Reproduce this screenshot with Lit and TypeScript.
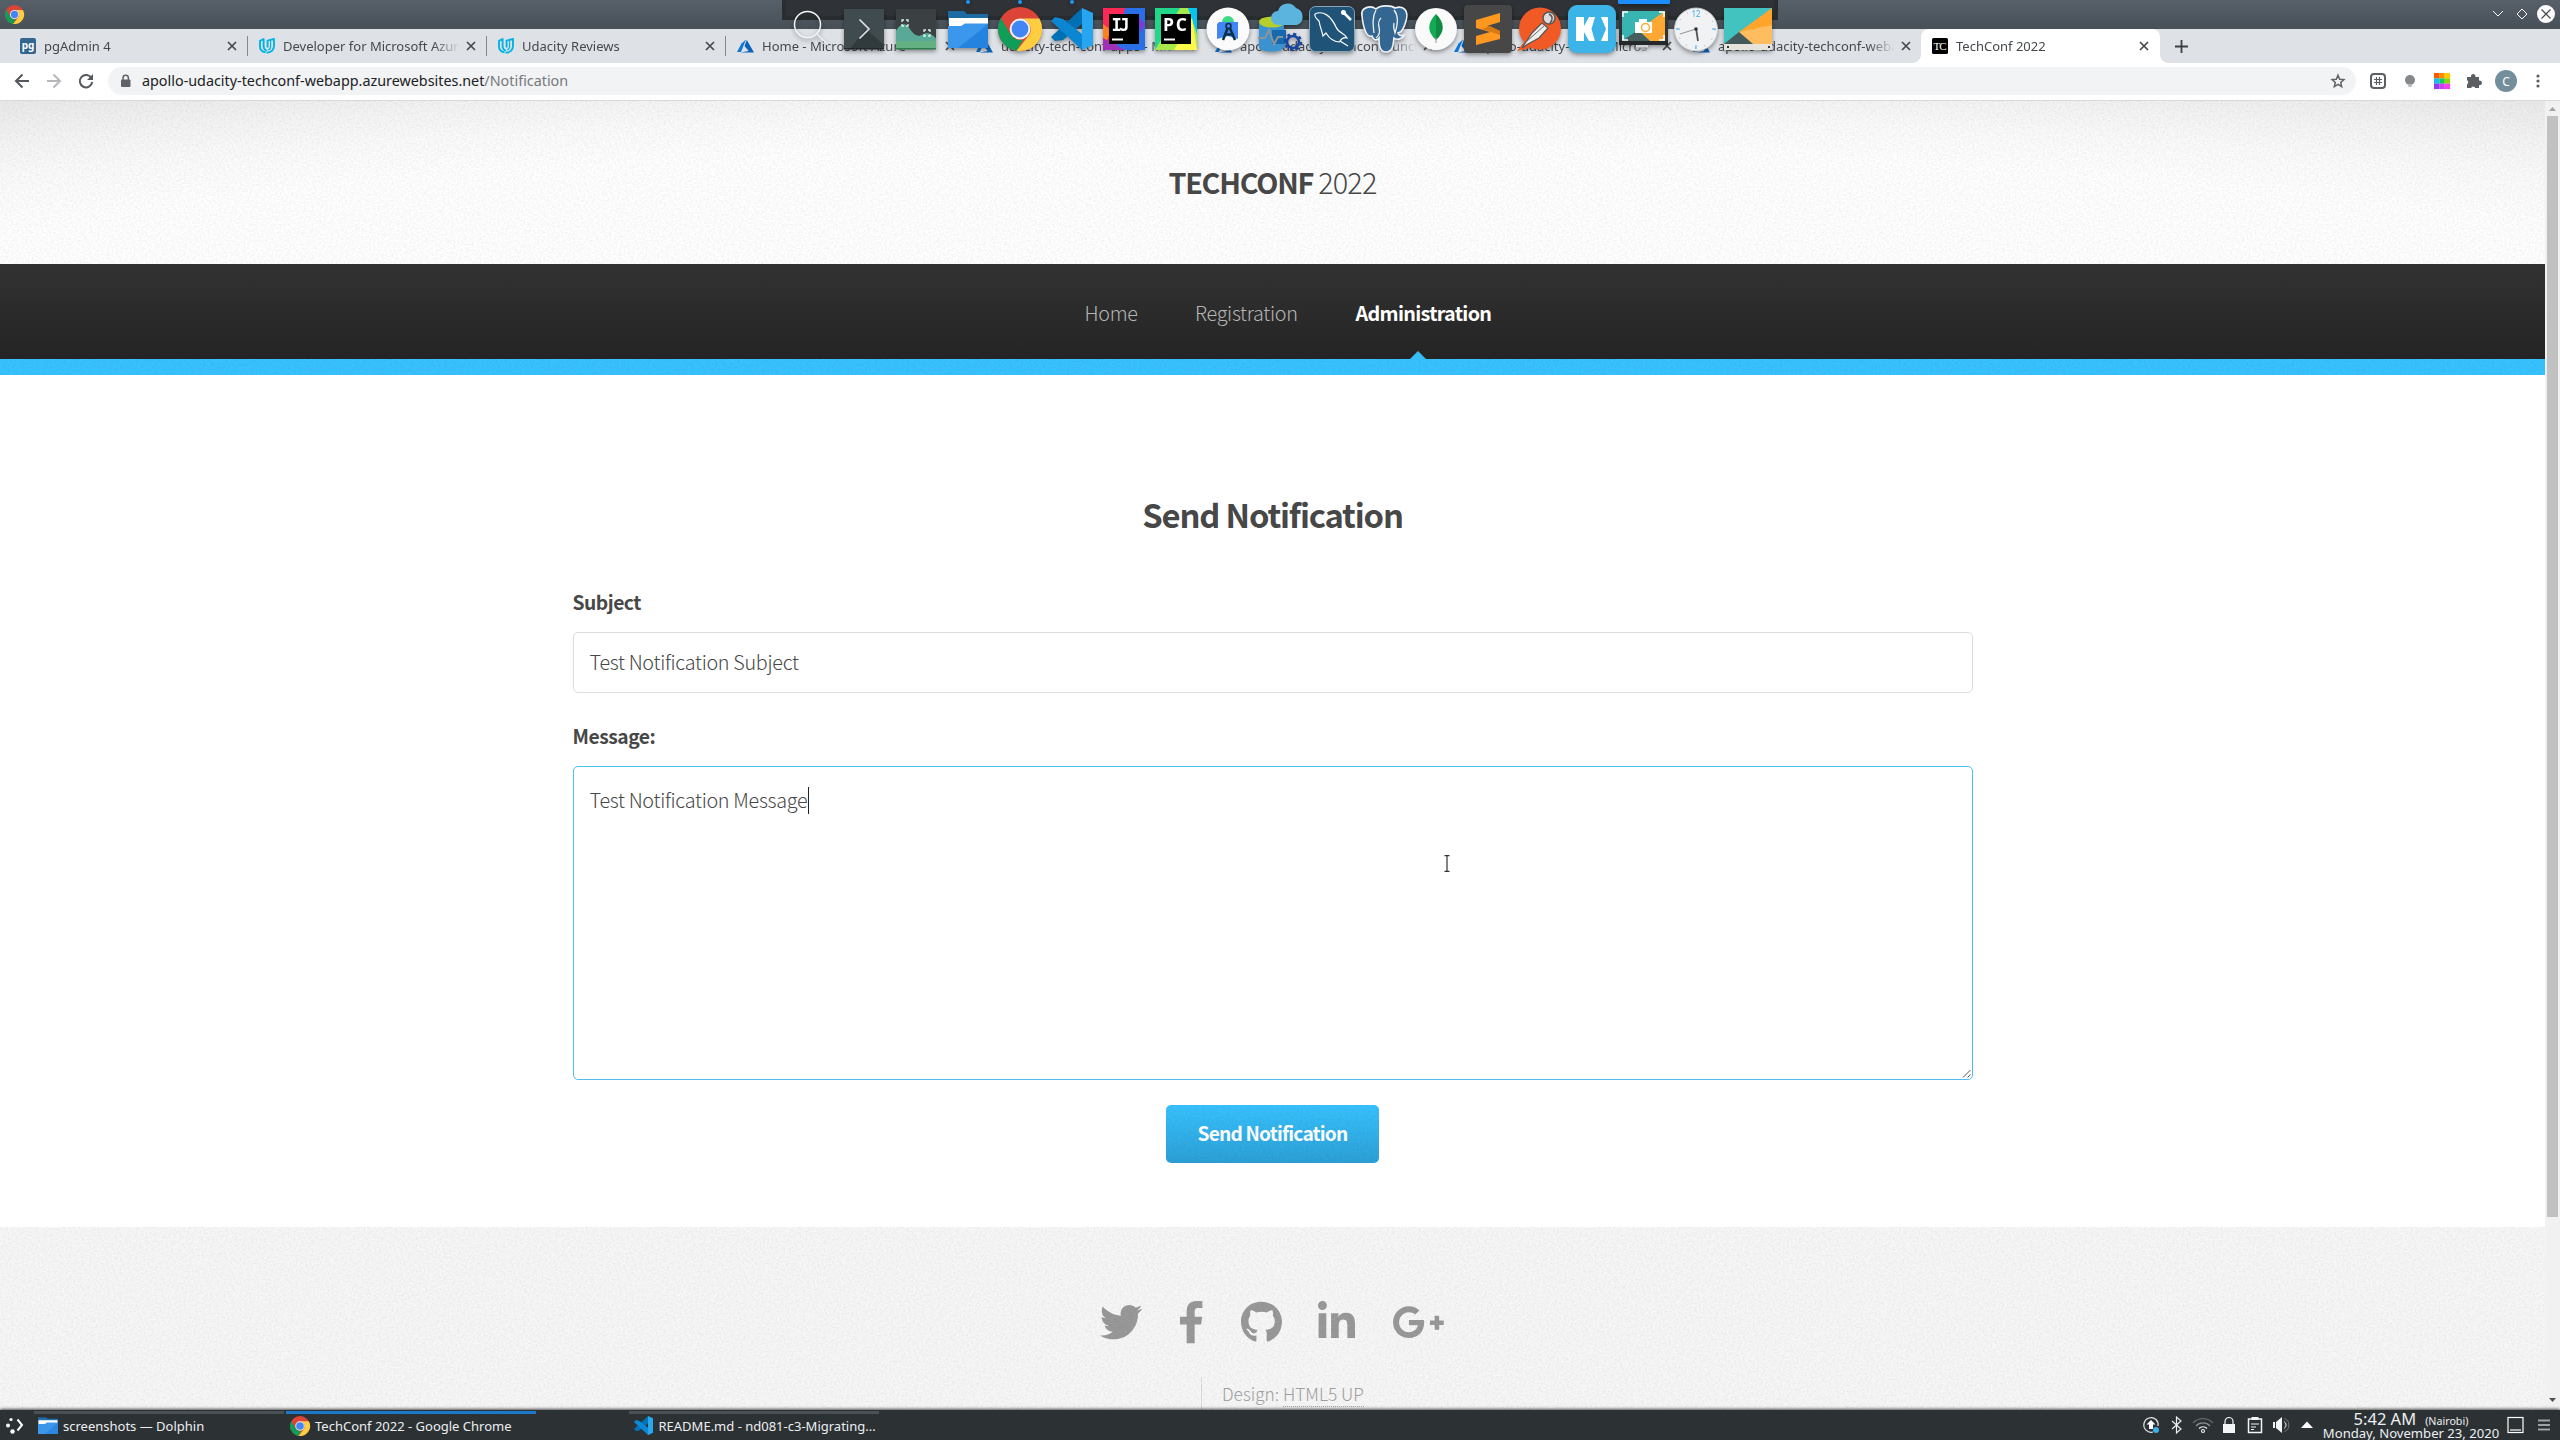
import { LitElement, html, svg, css } from "lit";
import { customElement } from "lit/decorators.js";

const chromeLogo = (size: number) => html`<svg width=${size} height=${size} viewBox="2 2 44 44">
  <circle cx="24" cy="24" r="22" fill="#db4437" />
  <path d="M4.9 13 14.6 29.6A11 11 0 0 0 27 34.6L20.6 45.8A22 22 0 0 1 4.9 13z" fill="#0f9d58" />
  <path d="M24 13.5H43.4A22 22 0 0 1 20.6 45.8L33.5 29.5A11 11 0 0 0 24 13.5z" fill="#ffcd40" />
  <circle cx="24" cy="24" r="10.4" fill="#f1f1f1" />
  <circle cx="24" cy="24" r="8.4" fill="#4285f4" />
</svg>`;

const folderLogo = (w: number, h: number) => html`<svg width=${w} height=${h} viewBox="0 0 40 37" preserveAspectRatio="none">
  <path d="M0 1h16l3 3h21v16H0z" fill="#1f6fae" />
  <path d="M1 7h38v12H1z" fill="#fff" />
  <path d="M0 15h14l4-3h22v25H0z" fill="#3b97ea" />
  <path d="M40 12v25H14z" fill="#1f7fdc" opacity=".6" />
</svg>`;

const codeLogo = (w: number, h: number) => html`<svg width=${w} height=${h} viewBox="0 0 42 42">
  <path d="M31 0 0 29l4 4 8-1 19-16z" fill="#0073b7" />
  <path d="M0 13l4-4 8 2 19 15v16z" fill="#0a8ad6" />
  <path d="M31 0l11 5v32l-11 5z" fill="#28a8f0" />
</svg>`;

const udacityMark = html`<svg width="16" height="16" viewBox="0 0 16 16" fill="none" stroke="#02b3e4" stroke-width="1.900" stroke-linejoin="round">
  <path d="M6.500 14.300C3.200 13.800 1 12 1 8.500V2.800L4.600 1V8c0 2.600 1 4 3.400 4.600" />
  <path d="M8.600 9.500V2.600L15 1v7c0 4-3 6.800-7.500 6.600" />
  <path d="M11.600 3v5.600c0 1.800-.8 3-2.400 3.400" stroke-width="1.200" />
</svg>`;

const azureMark = html`<svg width="17" height="16" viewBox="0 0 17 16">
  <path d="M9 1.500 4.500 5.500 0 14h4z" fill="#0f78d4" />
  <path d="M9.800 2 7.500 8l4.200 5L3.500 14.500H17z" fill="#0a63b8" />
</svg>`;

const pgMark = html`<svg width="16" height="16" viewBox="0 0 16 16">
  <rect width="16" height="16" rx="2" fill="#326690" />
  <text x="8" y="11" text-anchor="middle" font-family="Noto Sans, sans-serif" font-weight="700" font-size="10" fill="#fff">pg</text>
</svg>`;

const tcMark = html`<svg width="16" height="16" viewBox="0 0 16 16">
  <rect width="16" height="16" rx="1.500" fill="#000" />
  <text x="8" y="12" text-anchor="middle" font-family="Liberation Serif, serif" font-size="11" textLength="13" fill="#fff">TC</text>
</svg>`;

const crossMark = html`<svg class="cross" width="10" height="10" viewBox="0 0 10 10" stroke="#45494d" stroke-width="1.700">
  <path d="M1 1l8 8M9 1l-8 8" />
</svg>`;

const tabs = [
  { icon: pgMark, label: "pgAdmin 4" },
  { icon: udacityMark, label: "Developer for Microsoft Azure" },
  { icon: udacityMark, label: "Udacity Reviews" },
  { icon: azureMark, label: "Home - Microsoft Azure" },
  { icon: azureMark, label: "udacity-tech-conf-apps - Micr" },
  { icon: azureMark, label: "apollo-udacity-techconf-funct" },
  { icon: azureMark, label: "apollo-udacity-conf - Micros" },
  { icon: azureMark, label: "apollo-udacity-techconf-weba" },
];

/* Each drawing sits in a 52 x 60 slot, centred on x = 26. */
const dockIcons = [
  svg`<g fill="none" stroke="#f4f6f7" stroke-width="1.500"><circle cx="21.500" cy="24.500" r="13"/><path d="M31 34l11 11" stroke-opacity=".8"/></g>`,
  svg`<rect x="6" y="9" width="40" height="40" fill="#3f4b4e"/><path d="M28 29l18 16v4H12z" fill="#232a2c" opacity=".5"/><path d="M6 48h40v1.500H6z" fill="#22282a"/><path d="M21.500 19.500 31 29l-9.500 9.500" fill="none" stroke="#e3e6e8" stroke-width="1.600"/>`,
  svg`<rect x="6" y="9" width="40" height="40" fill="#3b4043"/><path d="M6 31c5-8 9-9 13-3 5 8 10 10 15 6 4-2 9 1 12 5v10H6z" fill="#63b183"/><path d="M6 31c5-8 9-9 13-3 5 8 10 10 15 6 4-2 9 1 12 5v2H6z" fill="#5aa898"/><path d="M6 48h40v1.500H6z" fill="#2f7d4e"/><path d="M12 22v-2h2m2 0h2v2m0 2v2h-2m-2 0h-2v-2M34 32v-2h2m2 0h2v2m0 2v2h-2m-2 0h-2v-2" fill="none" stroke="#d9f2ec" stroke-width="1.300"/>`,
  svg`<path d="M6 11h16l3 3h21v10H6z" fill="#1d6ba3"/><path d="M7 18h39v10H7z" fill="#fff"/><path d="M6 26h13l4-2.500h23V48H6z" fill="#3b97ec"/><path d="M46 24v24H16z" fill="#1c7adb" opacity=".7"/>`,
  svg`<g transform="translate(2 5)"><circle cx="24" cy="24" r="22" fill="#db4437"/><path d="M4.900 13 14.600 29.600A11 11 0 0 0 27 34.600L20.600 45.800A22 22 0 0 1 4.900 13z" fill="#0f9d58"/><path d="M24 13.500H43.400A22 22 0 0 1 20.600 45.800L33.500 29.500A11 11 0 0 0 24 13.500z" fill="#ffcd40"/><circle cx="24" cy="24" r="10.400" fill="#f1f1f1"/><circle cx="24" cy="24" r="8.400" fill="#4285f4"/></g>`,
  svg`<g transform="translate(5 8)"><path d="M31 0 0 29l4 4 8-1 19-16z" fill="#0070b4"/><path d="M0 13l4-4 8 2 19 15v16z" fill="#0a86d2"/><path d="M31 0l11 5v32l-11 5z" fill="#27a5f0"/></g>`,
  svg`<path d="M5 8h42v42H5z" fill="#2b6fe8"/><path d="M5 8h22L17 50H5z" fill="#fe2857"/><path d="M5 24l8 6-8 20z" fill="#fc801d"/><path d="M5 38l22 12H5z" fill="#a12fb8"/><path d="M38 14l9 10-4 8z" fill="#7a3bd8"/><rect x="11" y="14" width="30" height="30" fill="#000"/><text x="13.500" y="31" font-family="DejaVu Sans Mono, monospace" font-weight="700" font-size="17" textLength="18" fill="#fff">IJ</text><path d="M14 38.500h11v2H14z" fill="#fff"/>`,
  svg`<path d="M5 8h42v42H5z" fill="#21d789"/><path d="M5 50 30 8h17v42z" fill="#a7e84a"/><path d="M38 8h9v26z" fill="#07c3f2"/><path d="M42 18l5 32H24z" fill="#fcf84a"/><rect x="11" y="14" width="30" height="30" fill="#000"/><text x="13" y="31" font-family="Open Sans, sans-serif" font-weight="700" font-size="17.500" textLength="24" fill="#fff">PC</text><path d="M14 38.500h11v2H14z" fill="#fff"/>`,
  svg`<circle cx="26" cy="29" r="21.500" fill="#fbfbfb"/><path d="M20 22a6 6 0 0 1 12 0z" fill="#3ddc84"/><path d="M17 22h19v17l-10-3-11 3V24z" fill="#4285f4"/><path d="M26.500 26 21 40M27 26 33 40M22 34.500h10" fill="none" stroke="#073042" stroke-width="2.500"/><circle cx="26.500" cy="26" r="2.500" fill="#4285f4" stroke="#073042" stroke-width="1.500"/>`,
  svg`<path d="M5 23v24c0 6 25 6 25 0V23z" fill="#3a93cf"/><ellipse cx="18" cy="22" rx="13" ry="5.500" fill="#b6cf2b"/><path d="M18 30h14v14H18z" fill="#1769ae"/><path d="M24 25a7 7 0 0 1 0-14 10 10 0 0 1 18-3 9 9 0 0 1 1 17z" fill="#5ab4dd"/><path d="M4 38h7l4-8 5 14 4-7h5" fill="none" stroke="#8d9499" stroke-width="2"/><circle cx="39" cy="42" r="6" fill="none" stroke="#1646a0" stroke-width="2.500"/><circle cx="39" cy="42" r="8" fill="none" stroke="#1646a0" stroke-width="2.500" stroke-dasharray="3 3.280"/>`,
  svg`<rect x="3.500" y="6.500" width="45" height="45" rx="6" fill="#1f5377" stroke="#8aa3b5"/><path d="M9 14c8-4 16 2 21 13 3 7 9 6 11 11-3-1-5 0-7 3l8 5M9 14c-1 3 2 5 4 7 1 6 3 10 4 15l3-3c3 5 8 9 14 9" fill="none" stroke="#fff" stroke-width="1.200"/><path d="M36 11l4 4 5 5" stroke="#fff" stroke-width="2.500"/><circle cx="37.500" cy="12.500" r="2.500" fill="#fff"/>`,
  svg`<path d="M4 16c-2-9 9-11 14-7 4-4 15-4 19-1 9-3 14 3 11 13-2 7-5 12-8 12 1 3 3 3 6 2-2 5-8 5-10 3-1 5 0 14-8 14-7 0-7-8-7-14-3 4-6 1-7-2-6 2-9-10-10-20z" fill="#336791" stroke="#eef2f5" stroke-width="1.600"/><path d="M18 10c-4 7-3 15-2 23M18 38c4-3 4-7 3-11-1-3 0-7 2-9M36 10c5 6 4 14 1 23-1-4-2-6-1-10" fill="none" stroke="#eef2f5" stroke-width="1.300"/>`,
  svg`<circle cx="26" cy="29" r="21" fill="#fafafa"/><path d="M26 14c-9 9-9 18 0 26z" fill="#13aa52"/><path d="M26 14c9 9 9 18 0 26z" fill="#0f8a43"/><path d="M26 38v5" stroke="#999"/>`,
  svg`<rect x="2" y="5" width="48" height="48" rx="4" fill="#474747"/><path d="M14 20l24-7v9l-13 4 13 5v8l-24 6v-9l14-4-14-4z" fill="#ff9820"/><path d="M28 26l10 5v4l-18-6z" fill="#d87a10"/>`,
  svg`<path d="M3 51l8-10 6 7z" fill="#f15a24"/><circle cx="26" cy="28.500" r="21" fill="#f15a24"/><path d="M8 48l10-15 10-10 6 5-9 10-11 6z" fill="#eee" stroke="#555" stroke-width="1.200"/><path d="M12 42l19-17" stroke="#666"/><circle cx="35" cy="18" r="6" fill="#ddd" stroke="#555" stroke-width="1.500"/><path d="M35 14c4 2 4 6 1 9" fill="none" stroke="#555" stroke-width="1.500"/>`,
  svg`<rect x="2" y="5" width="48" height="48" rx="9" fill="#3cb4e7"/><path d="M10 17h8v9l5-9h8l-6 12 6 12h-8l-5-9v9h-8z" fill="#fff"/><path d="M28 17h14v24H28l-3-4v-16z" fill="#fff"/><path d="M29 17h6l5 12-5 12h-6l-3.500-12z" fill="#3cb4e7"/>`,
  svg`<rect x="1" y="9" width="49" height="36" fill="#2f3437"/><path d="M4 11h43v30H4z" fill="#38b5b0"/><path d="M47 11v30H32L20 30z" fill="#ffa733"/><path d="M20 30l12 11H4z" fill="#45605f"/><path d="M1 41h49v4H1z" fill="#24282a"/><path d="M18 45h12v2.500H18z" fill="#cfd3d5"/><path d="M5 17v-5h5M41 12h5v5M46 35v5h-5M10 40H5v-5" fill="none" stroke="#fff" stroke-width="1.600"/><path d="M17 22h17v11H17zM21 19h8v3h-8z" fill="#fff"/><circle cx="27.500" cy="27.500" r="4" fill="#fff" stroke="#ffa733" stroke-width="1.500"/>`,
  svg`<circle cx="26" cy="29.500" r="21.500" fill="#f0f2f4" stroke="#c9ccce"/><circle cx="26" cy="29.500" r="18.500" fill="none" stroke="#8a8f93" stroke-dasharray=".8 8.880"/><text x="26" y="17" text-anchor="middle" font-family="Noto Sans, sans-serif" font-size="8" fill="#3daee9">12</text><path d="M26 29l-16 5" stroke="#999" stroke-width="1.300"/><path d="M26 28l2 13" stroke="#555" stroke-width="1.800"/><path d="M6 29h4M42 29h4M26 45v4" stroke="#3daee9"/><circle cx="26" cy="29" r="1.800" fill="#333"/>`,
  svg`<path d="M2 8h48v42H2z" fill="#40b4c0"/><path d="M2 8h48L17 32 2 45z" fill="#42c3c0"/><path d="M50 8v42H34L17 32z" fill="#ffa52c"/><path d="M50 25v25H34L17 32z" fill="#ffbd60"/><path d="M17 32l14 12H2z" fill="#44595a"/><path d="M2 44h48v6H2z" fill="#e6e3dd"/><path d="M5 46h2v2H5zM46 46h2v2h-2z" fill="#333"/>`,
];

const socialIcons = [
  { cls: "tw", w: 512, d: "M459.37 151.716c.325 4.548.325 9.097.325 13.645 0 138.72-105.583 298.558-298.558 298.558-59.452 0-114.68-17.219-161.137-47.106 8.447.974 16.568 1.299 25.34 1.299 49.055 0 94.213-16.568 130.274-44.832-46.132-.975-84.792-31.188-98.112-72.772 6.498.974 12.995 1.624 19.818 1.624 9.421 0 18.843-1.3 27.614-3.573-48.081-9.747-84.143-51.98-84.143-102.985v-1.299c13.969 7.797 30.214 12.67 47.431 13.319-28.264-18.843-46.781-51.005-46.781-87.391 0-19.492 5.197-37.36 14.294-52.954 51.655 63.675 129.3 105.258 216.365 109.807-1.624-7.797-2.599-15.918-2.599-24.04 0-57.828 46.782-104.934 104.934-104.934 30.213 0 57.502 12.67 76.67 33.137 23.715-4.548 46.456-13.32 66.599-25.34-7.798 24.366-24.366 44.833-46.132 57.827 21.117-2.273 41.584-8.122 60.426-16.243-14.292 20.791-32.161 39.308-52.628 54.253z" },
  { cls: "fb", w: 270, d: "M80.700 512V283H0v-91h80.700v-71.700C80.700 42.400 128.300 0 197.800 0c33.300 0 64.900 2.500 73.200 3.600V85h-48.200c-37.800 0-45.100 18-45.100 44.300V192H268l-11.700 91h-78.600v229" },
  { cls: "gh", w: 496, d: "M244.800 8C106.100 8 0 113.300 0 252c0 110.900 69.800 205.800 169.500 239.200 12.800 2.300 17.300-5.600 17.300-12.100 0-6.200-.3-40.400-.3-61.400 0 0-70 15-84.700-29.800 0 0-11.400-29.100-27.800-36.600 0 0-22.900-15.700 1.600-15.400 0 0 24.900 2 38.600 25.800 21.900 38.600 58.600 27.500 72.900 20.900 2.300-16 8.800-27.100 16-33.700-55.900-6.200-112.300-14.300-112.300-110.500 0-27.500 7.600-41.300 23.600-58.900-2.600-6.500-11.100-33.300 2.600-67.900 20.900-6.500 69 27 69 27 20-5.600 41.500-8.500 62.800-8.500s42.800 2.900 62.800 8.500c0 0 48.100-33.600 69-27 13.700 34.700 5.200 61.400 2.600 67.900 16 17.700 25.800 31.500 25.800 58.900 0 96.500-58.900 104.200-114.800 110.500 9.200 7.900 17 22.900 17 46.400 0 33.700-.3 75.400-.3 83.600 0 6.500 4.600 14.400 17.300 12.100C428.200 457.800 496 362.900 496 252 496 113.300 383.500 8 244.800 8z" },
  { cls: "li", w: 448, d: "M100.300 448H7.400V148.900h92.900zM53.800 108.100C24.100 108.100 0 83.500 0 53.800a53.800 53.800 0 0 1 107.600 0c0 29.700-24.100 54.300-53.800 54.300zM447.900 448h-92.700V302.400c0-34.700-.7-79.200-48.300-79.200-48.300 0-55.700 37.700-55.700 76.700V448h-92.800V148.900h89.100v40.800h1.300c12.400-23.500 42.700-48.300 87.900-48.300 94 0 111.300 61.900 111.300 142.300V448z" },
  { cls: "gp", w: 640, d: "M386.061 228.496c1.834 9.692 3.143 19.384 3.143 31.956C389.204 370.205 315.599 448 204.800 448c-106.084 0-192-85.915-192-192s85.916-192 192-192c51.864 0 95.083 18.859 128.611 50.292l-52.126 50.030c-14.145-13.621-39.028-29.599-76.485-29.599-65.484 0-118.920 54.221-118.920 121.277 0 67.056 53.436 121.277 118.920 121.277 75.961 0 104.513-54.745 108.965-82.773H204.800v-66.009h181.261zm185.406 6.437V179.200h-56.001v55.733h-55.733v56.001h55.733v55.733h56.001v-55.733H627.200v-56.001h-55.733z" },
];

/* Paper-like speckle laid over a panel. */
const grain = html`<svg class="grain" width="100%" height="100%">
  <filter id="speckle" x="0" y="0" width="100%" height="100%">
    <feTurbulence type="fractalNoise" baseFrequency="0.5" numOctaves="2" seed="4" stitchTiles="stitch" />
    <feColorMatrix values="0 0 0 0 0  0 0 0 0 0  0 0 0 0 0  0.11 0 0 0 -0.038" />
  </filter>
  <rect width="100%" height="100%" filter="url(#speckle)" />
</svg>`;

@customElement("app-root")
export class AppRoot extends LitElement {
  static styles = css`
    :host { display: block; width: 2560px; height: 1440px; overflow: hidden; --ui: "Noto Sans", "Open Sans", sans-serif; --page: "Noto Sans CJK SC", "Noto Sans", sans-serif; font-family: var(--ui); }
    * { box-sizing: border-box; }
    svg { display: block; flex: none; overflow: visible; }
    .screen { position: relative; display: flex; flex-direction: column; width: 2560px; height: 1440px; background: #fff; }
    .titlebar { flex: none; display: flex; align-items: center; justify-content: space-between; height: 29px; padding: 0 5px 1px 4.500px; background: linear-gradient(#576069, #475057); }
    .winbtns { display: flex; align-items: center; gap: 9px; }
    .winbtns .min { margin-right: 3px; }

    .tabstrip { flex: none; display: flex; height: 34px; padding-left: 9px; background: #dee1e6; }
    .tab { flex: none; display: flex; align-items: center; width: 239px; padding-left: 11px; }
    .tab .label { flex: none; width: 177px; margin-left: 8px; margin-right: 6px; overflow: hidden; white-space: nowrap; font-size: 13px; line-height: 20px; color: #45494d; -webkit-mask-image: linear-gradient(90deg, #000 150px, transparent 177px); mask-image: linear-gradient(90deg, #000 150px, transparent 177px); }
    .tab .cross { margin-left: auto; margin-right: 10px; }
    .tab .end { width: 1px; height: 20px; background: #85898e; }
    .tab.active { position: relative; background: #fff; border-radius: 8px 8px 0 0; }
    .tab.active .cross { margin-right: 11px; }
    .tab.active::before, .tab.active::after { content: ""; position: absolute; bottom: 0; width: 8px; height: 8px; }
    .tab.active::before { left: -8px; background: radial-gradient(circle at 0 0, transparent 7.500px, #fff 8px); }
    .tab.active::after { right: -8px; background: radial-gradient(circle at 100% 0, transparent 7.500px, #fff 8px); }
    .newtab { align-self: center; margin-left: 15px; }

    .toolbar { flex: none; display: flex; align-items: center; height: 38px; padding: 0 14px 1px; background: #fff; border-bottom: 1px solid #d6d8dc; }
    .navicons { display: flex; gap: 16px; width: 94px; }
    .pill { display: flex; align-items: center; width: 2248px; height: 28px; padding: 0 11px 0 13px; border-radius: 14px; background: #f1f3f4; }
    .url { flex: 1; margin-left: 11px; font-size: 14.350px; line-height: 20px; color: #202124; white-space: nowrap; }
    .url span { color: #76797d; }
    .exts { display: flex; align-items: center; gap: 16px; margin-left: 14px; }
    .avatar { display: flex; align-items: center; justify-content: center; width: 22px; height: 22px; margin: 0 -3px; border-radius: 50%; background: #748f9c; color: #fff; font-size: 12px; }

    .view { flex: 1; min-height: 0; display: flex; }
    .page { width: 2545px; overflow: hidden; font-family: var(--page); color: #474747; }
    .grain { position: absolute; left: 0; top: 0; pointer-events: none; }
    .head { position: relative; display: flex; align-items: center; justify-content: center; height: 163px; padding-bottom: 2px; background: radial-gradient(ellipse 2000px 230px at 50% 130%, #fff 72%, #fbfbfb 86%, #f4f4f4 98%, #e7e7e7 115%); }
    .brand { position: relative; display: flex; gap: 5px; font-size: 28.800px; line-height: 40px; white-space: nowrap; }
    .brand b { font-weight: 700; letter-spacing: -1.250px; }
    .brand i { font-style: normal; font-weight: 300; letter-spacing: -0.800px; }
    .nav { position: relative; display: flex; align-items: center; gap: 59px; height: 95px; padding: 2px 0 0 1084.500px; background: linear-gradient(#323232, #242424); font-size: 19.800px; line-height: 30px; font-weight: 300; color: #b5b5b5; white-space: nowrap; letter-spacing: -0.300px; }
    .nav .n1 { width: 51.500px; } .nav .n2 { width: 101.500px; }
    .nav .n3 { width: 136px; font-weight: 700; color: #fff; letter-spacing: -0.700px; }
    .caret { position: absolute; left: 1410px; bottom: 0; border: 8px solid transparent; border-top: 0; border-bottom-color: #37bdf8; }
    .stripe { position: relative; height: 16px; background: #38c2ff; }

    .main { display: flex; flex-direction: column; align-items: center; height: 852px; padding-top: 119px; }
    .main h2 { margin: 0; font-size: 32.800px; line-height: 40px; font-weight: 700; letter-spacing: -1.150px; white-space: nowrap; }
    .form { display: flex; flex-direction: column; width: 1400px; margin-top: 53px; }
    .field-name { font-size: 19.300px; line-height: 30px; font-weight: 700; letter-spacing: -0.500px; }
    .box { display: flex; padding: 0 16px; border: 1px solid #dedede; border-radius: 5px; font-size: 19.800px; font-weight: 300; line-height: 30px; letter-spacing: -0.300px; color: #474747; }
    .box.single { height: 61px; margin: 15px 0 28px; padding-bottom: 2px; align-items: center; }
    .box.area { position: relative; height: 314px; margin-top: 15px; padding-top: 18px; border-color: #4fbdf0; align-items: flex-start; }
    .ibar { width: 1px; height: 27px; margin: 2px 0 0 1px; background: #222; }
    .grip { position: absolute; right: 1px; bottom: 1px; }
    .send { position: relative; overflow: hidden; display: flex; align-items: center; justify-content: center; width: 213px; height: 58px; margin-top: 25px; padding: 0 0 3px; border-radius: 5px; background: linear-gradient(#38c2ff, #2ba0d6); font-size: 19.200px; font-weight: 700; letter-spacing: -0.820px; color: #fff; white-space: nowrap; }

    .foot { position: relative; height: 190px; background: #f7f7f7; }
    .social { display: flex; padding: 74px 0 0 1099.500px; height: 117px; fill: #999; }
    .social svg { height: 42.300px; }
    .fb { margin-left: 38px; } .gh { margin-left: 39px; } .li { margin-left: 35.500px; } .gp { margin-left: 37px; }
    .credits { display: flex; margin-left: 1201px; margin-top: 33px; height: 40px; padding: 4px 0 0 20px; border-left: 1px solid #dcdcdc; font-size: 17.300px; line-height: 26px; font-weight: 300; color: #a0a0a0; white-space: pre; }
    .credits u { text-decoration: none; height: 26px; line-height: 26px; border-bottom: 1px dotted #aaa; }

    .scroll { width: 15px; display: flex; flex-direction: column; align-items: center; background: #f1f1f1; padding-top: 6px; }
    .thumb { width: 11px; height: 1101px; margin-top: 5px; background: #c1c1c1; }
    .down { margin-top: 181px; }

    .dock { position: absolute; left: 782px; top: 0; display: flex; width: 996px; height: 20px; background: #2f3337; border: solid #292d30; border-width: 0 4px 4px 4px; padding: 0; }
    .dock svg { width: 52px; height: 60px; filter: drop-shadow(0 2px 2px rgba(0, 0, 0, 0.4)); }
    .mouse { position: absolute; left: 1442.500px; top: 855px; }

    .panel { position: relative; flex: none; display: flex; height: 30px; background: #2c3134; box-shadow: 0 -1px 3px rgba(0, 0, 0, 0.7); color: #eceff1; }
    .launcher { width: 34px; padding: 7px 0 0 6px; }
    .task { display: flex; align-items: center; width: 250px; height: 28px; margin: 1px 2px 0 0; padding: 0 4px 2px; gap: 5px; border-top: 3px solid #4a5053; font-size: 13px; white-space: nowrap; }
    .task.on { border-color: #1d78cc; }
    .task.far { margin-left: 91px; padding-left: 5px; gap: 5.500px; }
    .tray { display: flex; align-items: center; margin-left: 1261px; gap: 8px; }
    .clock { display: flex; flex-direction: column; align-items: center; width: 174px; height: 30px; }
    .clock .t { display: flex; align-items: baseline; gap: 9px; height: 15px; font-size: 16.500px; line-height: 17px; white-space: nowrap; }
    .clock .t small { font-size: 10.700px; }
    .clock .d { height: 14px; font-size: 13.100px; line-height: 14px; margin-top: 1px; white-space: nowrap; }
  `;

  render() {
    return html`<div class="screen">
      <div class="titlebar">
        ${chromeLogo(19)}
        <div class="winbtns">
          <svg class="min" width="12" height="8" viewBox="0 0 12 8" fill="none" stroke="#fcfcfc"><path d="M1 1l5 5 5-5" /></svg>
          <svg width="12" height="12" viewBox="0 0 12 12" fill="none" stroke="#fcfcfc"><path d="M6 1l5 5-5 5-5-5z" /></svg>
          <svg width="18" height="18" viewBox="0 0 18 18"><circle cx="9" cy="9" r="9" fill="#fcfcfc" /><path d="M4.500 4.500l9 9M13.500 4.500l-9 9" stroke="#434b52" stroke-width="1.200" /></svg>
        </div>
      </div>

      <div class="tabstrip">
        ${tabs.map((t, i) => html`<div class="tab">${t.icon}<div class="label">${t.label}</div>${crossMark}${i < 7 ? html`<div class="end"></div>` : ""}</div>`)}
        <div class="tab active">${tcMark}<div class="label">TechConf 2022</div>${crossMark}</div>
        <svg class="newtab" width="13" height="13" viewBox="0 0 13 13" stroke="#3c4043" stroke-width="1.800"><path d="M6.500 0v13M0 6.500h13" /></svg>
      </div>

      <div class="toolbar">
        <div class="navicons">
          <svg width="16" height="16" viewBox="0 0 16 16" fill="none" stroke="#55585c" stroke-width="2"><path d="M15 8H2M8.500 1.500 2 8l6.500 6.500" /></svg>
          <svg width="16" height="16" viewBox="0 0 16 16" fill="none" stroke="#b5b7ba" stroke-width="2"><path d="M1 8h13M7.500 1.500 14 8l-6.500 6.500" /></svg>
          <svg width="16" height="16" viewBox="0 0 16 16" fill="none" stroke="#55585c" stroke-width="2"><path d="M13.500 5.200A6.200 6.200 0 1 0 14.200 9" /><path d="M15 1v6H9z" fill="#55585c" stroke="none" /></svg>
        </div>
        <div class="pill">
          <svg width="10" height="13" viewBox="0 0 10 13"><rect y="4.500" width="9.500" height="7.500" rx="1" fill="#5f6368" /><path d="M2 5V3a2.700 2.700 0 0 1 5.400 0v2" fill="none" stroke="#5f6368" stroke-width="1.500" /></svg>
          <div class="url">apollo-udacity-techconf-webapp.azurewebsites.net<span>/Notification</span></div>
          <svg width="14" height="14" viewBox="0 0 14 14" fill="none" stroke="#5f6368" stroke-width="1.500"><path d="M7 1.200l1.700 4 4.200.4-3.200 2.800 1 4.200L7 10.400l-3.700 2.200 1-4.200L1.100 5.600l4.200-.4z" /></svg>
        </div>
        <div class="exts">
          <svg width="16" height="16" viewBox="0 0 16 16" fill="none" stroke="#5b5f63"><rect x="1" y="1" width="14" height="14" rx="3" stroke-width="2" /><path d="M6.500 4v8M9.500 4v8M4 6.500h8M4 9.500h8" stroke-width="1.200" /></svg>
          <svg width="16" height="16" viewBox="0 0 16 16"><circle cx="8" cy="7" r="5" fill="#85888a" /><path d="M5.500 11h5l-1 3h-3z" fill="#b9bbbc" /></svg>
          <svg width="16" height="16" viewBox="0 0 15 15">
            ${["#ff5a00", "#ff8a00", "#ffc800", "#1fb6f5", "#17c964", "#8fd400", "#8a3ff5", "#d23cf0", "#f83df0"].map((c, i) => svg`<rect x=${(i % 3) * 5} y=${Math.floor(i / 3) * 5} width="5.100" height="5.100" fill=${c} />`)}
          </svg>
          <svg width="16" height="16" viewBox="0 0 16 16" fill="#5b5f63"><path d="M1 4h4a2.300 2.300 0 1 1 4.400 0H13v3.700a2.300 2.300 0 1 1 0 4.400V15H9.300a2.200 2.200 0 0 0-4.200 0H1v-3.800a2.200 2.200 0 0 0 0-4z" /></svg>
          <div class="avatar">C</div>
          <svg width="16" height="16" viewBox="0 0 16 16" fill="#5b5f63"><circle cx="8" cy="3" r="1.600" /><circle cx="8" cy="8" r="1.600" /><circle cx="8" cy="13" r="1.600" /></svg>
        </div>
      </div>

      <div class="view">
        <div class="page">
          <div class="head">${grain}<div class="brand"><b>TECHCONF</b><i>2022</i></div></div>
          <div class="nav">
            <span class="n1">Home</span><span class="n2">Registration</span><span class="n3">Administration</span>
            <div class="caret"></div>
          </div>
          <div class="stripe">${grain}</div>
          <div class="main">
            <h2>Send Notification</h2>
            <div class="form">
              <div class="field-name">Subject</div>
              <div class="box single">Test Notification Subject</div>
              <div class="field-name">Message:</div>
              <div class="box area">Test Notification Message<div class="ibar"></div>
                <svg class="grip" width="9" height="9" viewBox="0 0 9 9" stroke="#555"><path d="M1 8.500 8.500 1M5.500 8.500l3-3" /></svg>
              </div>
            </div>
            <div class="send">${grain}<span>Send Notification</span></div>
          </div>
          <div class="foot">
            ${grain}
            <div class="social">
              ${socialIcons.map((s) => html`<svg class=${s.cls} width=${s.w * 0.0826} viewBox="0 0 ${s.w} 512"><path d=${s.d} /></svg>`)}
            </div>
            <div class="credits"><span>Design: </span><u>HTML5 UP</u></div>
          </div>
        </div>
        <div class="scroll">
          <svg width="7" height="4" viewBox="0 0 7 4"><path d="M0 4 3.500 0 7 4z" fill="#a3a3a3" /></svg>
          <div class="thumb"></div>
          <svg class="down" width="7" height="4" viewBox="0 0 7 4"><path d="M0 0l3.500 4L7 0z" fill="#505050" /></svg>
        </div>
      </div>

      <div class="panel">
        <div class="launcher">
          <svg width="18" height="17" viewBox="0 0 18 17" fill="#fff"><circle cx="5" cy="2.500" r="1.600" /><circle cx="2" cy="8.500" r="2" /><circle cx="6.500" cy="14.500" r="2.200" /><path d="M11.500 2.500 16 8l-4.500 5.500" fill="none" stroke="#fff" stroke-width="2" /></svg>
        </div>
        <div class="task">${folderLogo(20, 17)}<span>screenshots — Dolphin</span></div>
        <div class="task on">${chromeLogo(20)}<span>TechConf 2022 - Google Chrome</span></div>
        <div class="task far">${codeLogo(19, 19)}<span>README.md - nd081-c3-Migrating...</span></div>
        <div class="tray">
          <svg width="18" height="18" viewBox="0 0 18 18"><path d="M14 3.500A7.300 7.300 0 1 0 11 16M14 3.500A7.300 7.300 0 0 1 16 10" fill="none" stroke="#e8eaeb" stroke-width="1.200" /><path d="M9 4l4.500 4.500H11V13H7V8.500H4.500z" fill="#fff" /><circle cx="14" cy="14" r="3" fill="#3daee9" /></svg>
          <svg width="18" height="18" viewBox="0 0 18 18" fill="none" stroke="#eceff1" stroke-width="1.200"><path d="M4 5l9 8-4.500 4V1L13 5l-9 8" /></svg>
          <svg width="18" height="18" viewBox="0 0 18 18" fill="none" stroke="#62676a" stroke-width="1.200"><path d="M-1 7a13.500 13.500 0 0 1 20 0" /><path d="M2 10a9.500 9.500 0 0 1 14 0" stroke="#8a8f92" /><path d="M5 12.500a5.500 5.500 0 0 1 8 0" stroke="#eee" /><circle cx="9" cy="15" r="1.500" stroke="#eee" /></svg>
          <svg width="18" height="18" viewBox="0 0 18 18"><rect x="3" y="8" width="12" height="9" fill="#f4f5f6" /><path d="M5 8V5.500a4 4 0 0 1 8 0V8" fill="none" stroke="#f4f5f6" stroke-width="1.200" /></svg>
          <svg width="18" height="18" viewBox="0 0 18 18" fill="none" stroke="#f4f5f6" stroke-width="1.500"><rect x="2.500" y="3" width="13" height="13.500" /><path d="M5.500 2.500h7" stroke-width="3" /><path d="M5 8h8M5 11h5M5 13.500h3" stroke-width="1.200" /></svg>
          <svg width="18" height="18" viewBox="0 0 18 18"><path d="M1 6h2v6H1zM4 6l6-5v16l-6-5z" fill="#f4f5f6" /><path d="M12 5.500a4 4 0 0 1 0 7" fill="none" stroke="#eee" /><path d="M12.500 2.500a7 7 0 0 1 0 13" fill="none" stroke="#73787b" /></svg>
          <svg width="18" height="18" viewBox="0 0 18 18"><path d="M3 12l6-6.500 6 6.500z" fill="#fff" /></svg>
          <div class="clock">
            <div class="t"><span>5:42 AM</span><small>(Nairobi)</small></div>
            <div class="d">Monday, November 23, 2020</div>
          </div>
          <svg width="18" height="18" viewBox="0 0 18 18" fill="none" stroke="#fff" stroke-width="1.200"><rect x="2" y="1.500" width="15" height="15" /><path d="M4 14h11" /></svg>
          <svg width="18" height="18" viewBox="0 0 18 18"><path d="M6 4.500h12M6 9h12M6 13.500h12" stroke="#a0a3a5" stroke-width="1.800" /></svg>
        </div>
      </div>

      <div class="dock">
        ${dockIcons.map((icon, i) => html`<svg viewBox="0 0 52 60">${icon}${i >= 3 && i <= 5 ? svg`<circle cx="26" cy="2" r="2" fill="#1d99f3"/>` : ""}${i === 16 ? svg`<path d="M0 0h52v2.500q0 1.500-1.500 1.500h-49Q0 4 0 2.500z" fill="#1d8cff"/>` : ""}</svg>`)}
      </div>
      <svg class="mouse" width="8" height="17" viewBox="0 0 8 17" fill="none" stroke="#333" stroke-width="1.200"><path d="M1.500 .6h5M4 .6v15.800M1.500 16.400h5" /></svg>
    </div>`;
  }
}
